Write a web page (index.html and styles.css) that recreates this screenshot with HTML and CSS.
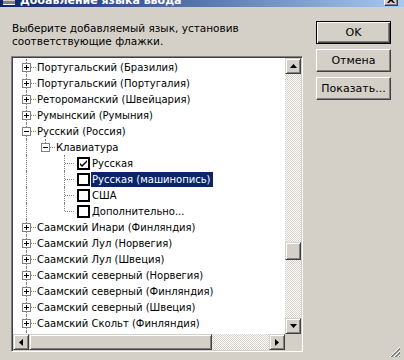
FILE: index.html
```html
<!DOCTYPE html>
<html lang="ru">
<head>
    <meta charset="UTF-8">
    <title>Добавление языка ввода</title>
    <link rel="stylesheet" href="styles.css">
</head>
<body>
    <div class="titlebar">
        <span class="app-icon"></span>
        <span class="title">Добавление языка ввода</span>
        <span class="close-btn">
            <svg width="8" height="7" viewBox="0 0 8 7"><path d="M0 0h2l2 2 2-2h2L5 3.5 8 7H6L4 5 2 7H0l3-3.5z" fill="#000"/></svg>
        </span>
    </div>
    <div class="dialog">
        <div class="main">
            <p class="prompt">Выберите добавляемый язык, установив<br>соответствующие флажки.</p>
            <div class="tree-box">
                <div class="tree">
                    <div class="row"><span class="cell tee"><span class="exp plus"></span></span><span class="label">Португальский (Бразилия)</span></div>
                    <div class="row"><span class="cell tee"><span class="exp plus"></span></span><span class="label">Португальский (Португалия)</span></div>
                    <div class="row"><span class="cell tee"><span class="exp plus"></span></span><span class="label">Ретороманский (Швейцария)</span></div>
                    <div class="row"><span class="cell tee"><span class="exp plus"></span></span><span class="label">Румынский (Румыния)</span></div>
                    <div class="row"><span class="cell tee"><span class="exp"></span></span><span class="label">Русский (Россия)</span></div>
                    <div class="row"><span class="cell pipe"></span><span class="cell elbow"><span class="exp"></span></span><span class="label">Клавиатура</span></div>
                    <div class="row"><span class="cell pipe"></span><span class="cell"></span><span class="cell tee"></span><span class="check on"><svg width="9" height="9" viewBox="0 0 9 9"><path d="M1 4l2 2 5-5v2L3 8 1 6z" fill="#000"/></svg></span><span class="label">Русская</span></div>
                    <div class="row"><span class="cell pipe"></span><span class="cell"></span><span class="cell tee"></span><span class="check"></span><span class="label selected">Русская (машинопись)</span></div>
                    <div class="row"><span class="cell pipe"></span><span class="cell"></span><span class="cell tee"></span><span class="check"></span><span class="label">США</span></div>
                    <div class="row"><span class="cell pipe"></span><span class="cell"></span><span class="cell elbow"></span><span class="check"></span><span class="label">Дополнительно...</span></div>
                    <div class="row"><span class="cell tee"><span class="exp plus"></span></span><span class="label">Саамский Инари (Финляндия)</span></div>
                    <div class="row"><span class="cell tee"><span class="exp plus"></span></span><span class="label">Саамский Лул (Норвегия)</span></div>
                    <div class="row"><span class="cell tee"><span class="exp plus"></span></span><span class="label">Саамский Лул (Швеция)</span></div>
                    <div class="row"><span class="cell tee"><span class="exp plus"></span></span><span class="label">Саамский северный (Норвегия)</span></div>
                    <div class="row"><span class="cell tee"><span class="exp plus"></span></span><span class="label">Саамский северный (Финляндия)</span></div>
                    <div class="row"><span class="cell tee"><span class="exp plus"></span></span><span class="label">Саамский северный (Швеция)</span></div>
                    <div class="row"><span class="cell tee"><span class="exp plus"></span></span><span class="label">Саамский Скольт (Финляндия)</span></div>
                    <div class="row"><span class="cell tee"><span class="exp plus"></span></span><span class="label">Саамский южный (Норвегия)</span></div>
                </div>
                <div class="vscroll">
                    <span class="sbtn"><svg width="7" height="4" viewBox="0 0 7 4"><path d="M3.5 0L7 4H0z" fill="#000"/></svg></span>
                    <span class="track">
                        <span class="thumb" style="margin-top: 168px"></span>
                    </span>
                    <span class="sbtn"><svg width="7" height="4" viewBox="0 0 7 4"><path d="M0 0h7L3.5 4z" fill="#000"/></svg></span>
                </div>
                <div class="hscroll">
                    <span class="sbtn"><svg width="4" height="7" viewBox="0 0 4 7"><path d="M4 0v7L0 3.5z" fill="#000"/></svg></span>
                    <span class="track">
                        <span class="thumb" style="width: 183px"></span>
                    </span>
                    <span class="sbtn"><svg width="4" height="7" viewBox="0 0 4 7"><path d="M0 0l4 3.5L0 7z" fill="#000"/></svg></span>
                </div>
                <div class="corner"></div>
            </div>
        </div>
        <div class="buttons">
            <button class="btn default">OK</button>
            <button class="btn">Отмена</button>
            <button class="btn">Показать...</button>
        </div>
    </div>
    <div class="grip">
        <svg width="12" height="12" viewBox="0 0 12 12">
            <path d="M11 1L1 11M11 5L5 11M11 9L9 11" stroke="#fff" stroke-width="1"/>
            <path d="M11 2L2 11M11 3L3 11M11 6L6 11M11 7L7 11M11 10L10 11" stroke="#808080" stroke-width="1"/>
        </svg>
    </div>
</body>
</html>
```

FILE: styles.css
```css
body {
    margin: 0;
    height: 360px;
    overflow: hidden;
    background-color: #d4d0c8;
    font-family: "DejaVu Sans", Tahoma, sans-serif;
    font-size: 10px;
    color: #000;
}

.titlebar {
    height: 18px;
    margin-top: -11px;
    padding: 0 6px 0 3px;
    display: flex;
    align-items: flex-end;
    background: linear-gradient(to right, #0a246a, #a6caf0);
    color: #fff;
}
.app-icon {
    width: 12px;
    height: 14px;
    margin-bottom: 2px;
    background: #d4d0c8;
    border-bottom: 1px solid #fff;
    box-shadow: inset 0 -3px #808080;
}
.title {
    margin-left: 5px;
    font-size: 11px;
    font-weight: bold;
    line-height: 13px;
    flex: 1;
}
.close-btn {
    width: 14px;
    height: 13px;
    margin-bottom: 1px;
    box-sizing: border-box;
    display: flex;
    align-items: center;
    justify-content: center;
    background: #d4d0c8;
    border: 1px solid;
    border-color: #fff #404040 #404040 #fff;
    box-shadow: inset -1px -1px #808080;
}

.dialog {
    display: flex;
    padding-left: 11px;
}
.main {
    width: 292px;
}
.prompt {
    margin: 15px 0 8px 1px;
    font-size: 10.5px;
    line-height: 13px;
}

.tree-box {
    width: 292px;
    height: 296px;
    box-sizing: border-box;
    display: grid;
    grid-template-columns: 1fr 16px;
    grid-template-rows: 1fr 16px;
    background: #fff;
    border: 1px solid;
    border-color: #808080 #fff #fff #808080;
    box-shadow: inset 1px 1px #404040, inset -1px -1px #d4d0c8;
    padding: 1px;
}
.tree {
    overflow: hidden;
    padding: 1px 0 0 4px;
}
.row {
    display: flex;
    height: 16px;
    white-space: nowrap;
}
.cell {
    flex: none;
    width: 19px;
    height: 16px;
    position: relative;
}
.cell.pipe::before,
.cell.tee::before,
.cell.elbow::before {
    content: "";
    position: absolute;
    left: 9px;
    top: 0;
    bottom: 0;
    border-left: 1px dotted #808080;
}
.cell.elbow::before {
    bottom: 8px;
}
.cell.tee::after,
.cell.elbow::after {
    content: "";
    position: absolute;
    left: 10px;
    right: 0;
    top: 8px;
    border-top: 1px dotted #808080;
}
.exp {
    position: absolute;
    z-index: 1;
    left: 5px;
    top: 4px;
    width: 9px;
    height: 9px;
    box-sizing: border-box;
    border: 1px solid #808080;
    background: #fff;
}
.exp::before {
    content: "";
    position: absolute;
    left: 1px;
    top: 3px;
    width: 5px;
    height: 1px;
    background: #000;
}
.exp.plus::after {
    content: "";
    position: absolute;
    left: 3px;
    top: 1px;
    width: 1px;
    height: 5px;
    background: #000;
}
.check {
    flex: none;
    width: 13px;
    height: 13px;
    margin: 2px 0 0 3px;
    box-sizing: border-box;
    border: 2px solid #000;
    background: #fff;
    display: flex;
    align-items: center;
    justify-content: center;
}
.label {
    height: 15px;
    line-height: 15px;
    margin-top: 1px;
    padding: 0 2px 0 1px;
}
.check + .label {
    margin-left: 1px;
}
.label.selected {
    background: #0a246a;
    color: #fff;
}

.vscroll,
.hscroll {
    display: flex;
}
.vscroll {
    flex-direction: column;
}
.track {
    flex: 1;
    display: flex;
    background: repeating-conic-gradient(#d4d0c8 0 25%, #fff 0 50%) 0 0 / 2px 2px;
}
.sbtn,
.thumb,
.corner {
    background: #d4d0c8;
}
.sbtn,
.thumb {
    flex: none;
    box-sizing: border-box;
    border: 1px solid;
    border-color: #d4d0c8 #404040 #404040 #d4d0c8;
    box-shadow: inset 1px 1px #fff, inset -1px -1px #808080;
}
.sbtn {
    width: 16px;
    height: 16px;
    display: flex;
    align-items: center;
    justify-content: center;
}
.vscroll .thumb {
    width: 16px;
    height: 18px;
}
.hscroll .thumb {
    height: 16px;
}

.buttons {
    margin: 14px 0 0 13px;
    display: flex;
    flex-direction: column;
    gap: 5px;
}
.btn {
    width: 75px;
    height: 23px;
    padding: 0;
    font-family: inherit;
    font-size: 11px;
    color: #000;
    background: #d4d0c8;
    border: 1px solid;
    border-color: #fff #404040 #404040 #fff;
    box-shadow: inset -1px -1px #808080;
}
.btn.default {
    border-color: #000;
    box-shadow: inset 1px 1px #fff, inset -1px -1px #404040, inset -2px -2px #808080;
}

.grip {
    position: absolute;
    right: 3px;
    bottom: 2px;
    width: 12px;
    height: 12px;
}
```
